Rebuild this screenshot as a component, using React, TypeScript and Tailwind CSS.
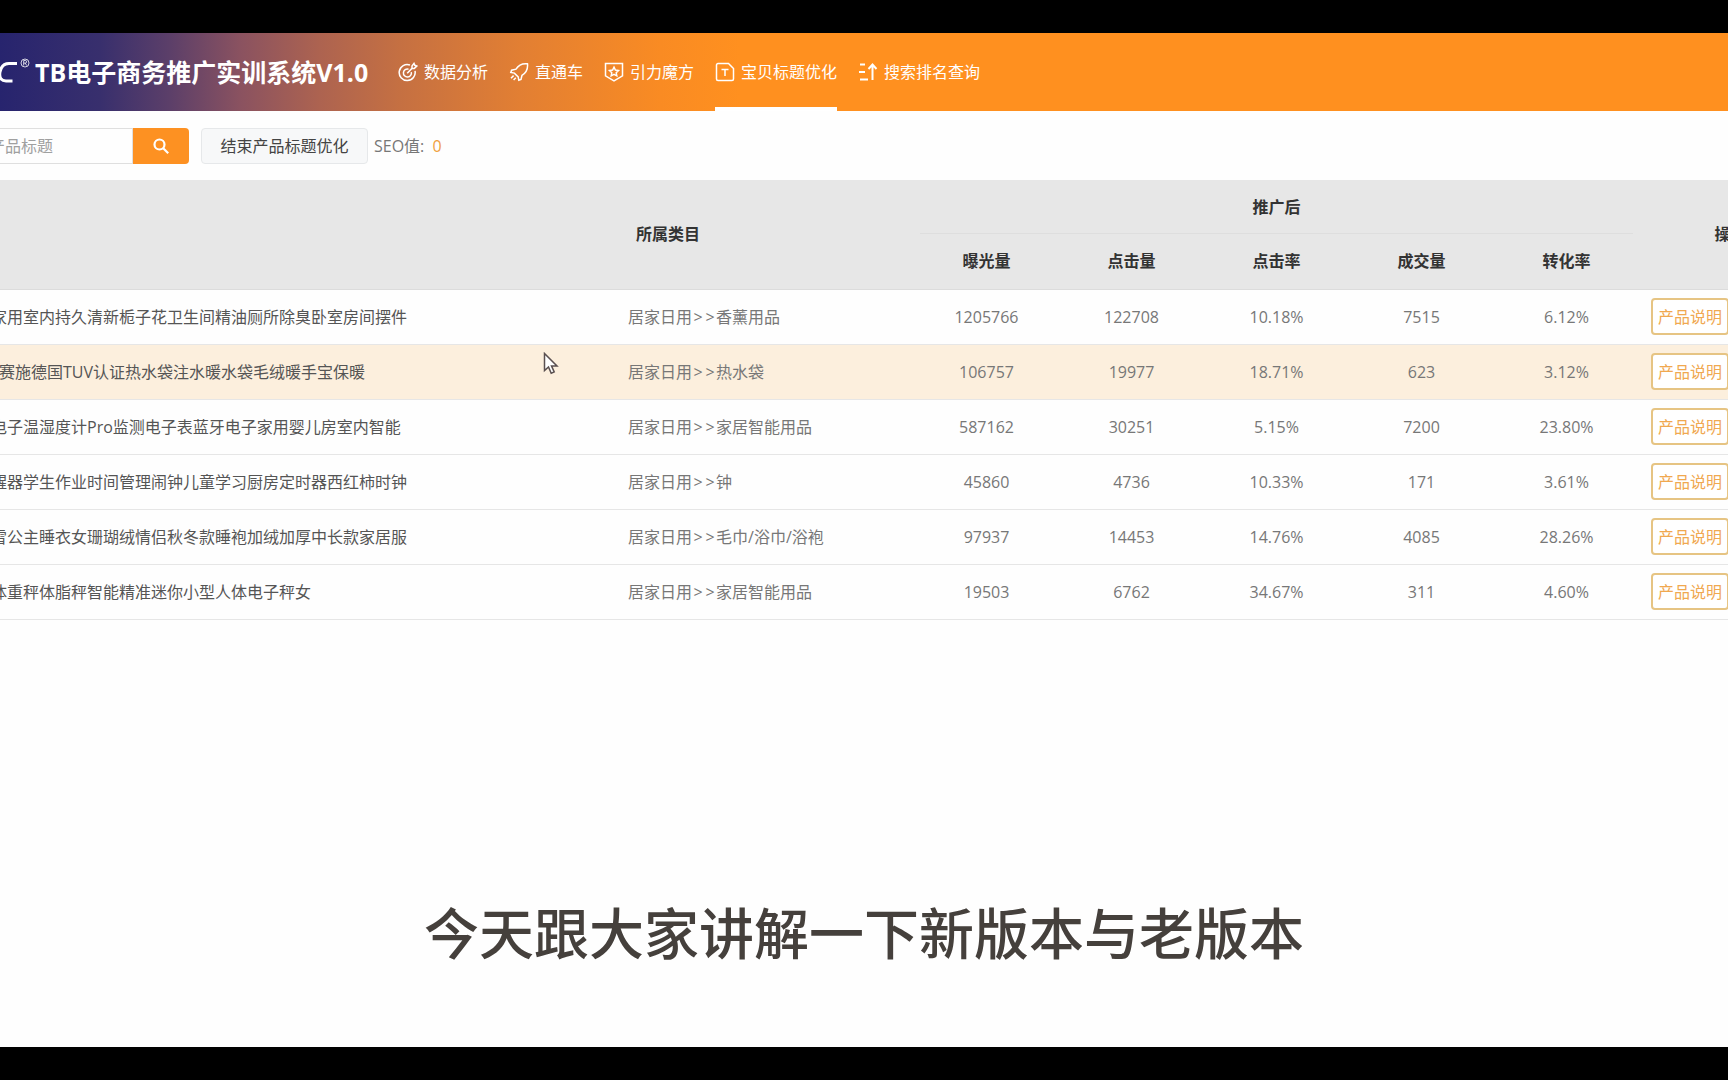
import type { ReactElement, ReactNode } from 'react'

const navItems: Array<{ label: string; icon: ReactNode; active?: boolean }> = [
  {
    label: '数据分析',
    icon: (
      <>
        <path d="M12 3A8 8 0 1 0 17 8.800" />
        <path d="M10.500 7.200a4 4 0 1 0 2.800 2.900" />
        <path d="M9.200 11.200 14 6.400V4l2-2.600.8 1.900 2 .8-2.500 2.300H14" />
      </>
    ),
  },
  {
    label: '直通车',
    icon: (
      <>
        <path d="M18.500 1.800c-5-.6-9 1.200-11.500 5.400L2.600 8.200 1.800 10.500l3.600.6 3.800 3.800.6 3.400 2.200-.8 1-4.200c4.200-2.600 6-6.600 5.500-11.500z" />
        <path d="M4.600 13.600 2 16.200M6.800 15.800l-2.200 2.200" />
      </>
    ),
  },
  {
    label: '引力魔方',
    icon: (
      <>
        <path d="M1.500 1.500h17v12.300L10 18.800l-8.500-5z" />
        <path d="m10 5.200 1.400 2.900 3.100.4-2.300 2.200.6 3.200-2.800-1.500-2.800 1.500.6-3.200-2.300-2.200 3.100-.4z" />
      </>
    ),
  },
  {
    label: '宝贝标题优化',
    active: true,
    icon: (
      <>
        <path d="M3 1.500h10.500l5 5V17a1.500 1.500 0 0 1-1.500 1.500H3A1.500 1.500 0 0 1 1.500 17V3A1.500 1.500 0 0 1 3 1.500z" />
        <path d="M6.500 7.500h7M10 7.500v6.500" />
      </>
    ),
  },
  {
    label: '搜索排名查询',
    icon: (
      <>
        <path d="M2 2.500h5M1 10h6M2 17.500h8" strokeWidth="2" />
        <path d="M14.500 18V3M10.500 7l4-4.500 4 4.500" strokeWidth="2" />
      </>
    ),
  },
]

const metricHeads = ['曝光量', '点击量', '点击率', '成交量', '转化率']

const rows: Array<{ title: string; category: string; metrics: string[]; hovered?: boolean }> = [
  {
    title: '家用室内持久清新栀子花卫生间精油厕所除臭卧室房间摆件',
    category: '香薰用品',
    metrics: ['1205766', '122708', '10.18%', '7515', '6.12%'],
  },
  {
    title: '\u2002赛施德国TUV认证热水袋注水暖水袋毛绒暖手宝保暖',
    category: '热水袋',
    metrics: ['106757', '19977', '18.71%', '623', '3.12%'],
    hovered: true,
  },
  {
    title: '电子温湿度计Pro监测电子表蓝牙电子家用婴儿房室内智能',
    category: '家居智能用品',
    metrics: ['587162', '30251', '5.15%', '7200', '23.80%'],
  },
  {
    title: '醒器学生作业时间管理闹钟儿童学习厨房定时器西红柿时钟',
    category: '钟',
    metrics: ['45860', '4736', '10.33%', '171', '3.61%'],
  },
  {
    title: '雪公主睡衣女珊瑚绒情侣秋冬款睡袍加绒加厚中长款家居服',
    category: '毛巾/浴巾/浴袍',
    metrics: ['97937', '14453', '14.76%', '4085', '28.26%'],
  },
  {
    title: '体重秤体脂秤智能精准迷你小型人体电子秤女',
    category: '家居智能用品',
    metrics: ['19503', '6762', '34.67%', '311', '4.60%'],
  },
]

function Header(): ReactElement {
  return (
    <header className="flex h-[78px] items-stretch bg-[linear-gradient(90deg,#27246e_0px,#382f6d_100px,#5c3f69_170px,#8a5260_240px,#ad6350_320px,#c57042_400px,#e27f33_520px,#f98b23_660px,#ff901f_740px)] text-white">
      <div className="flex w-[398px] shrink-0 items-center">
        <svg viewBox="0 0 35 40" className="h-10 w-[35px] shrink-0" fill="none" stroke="currentColor">
          <path d="M17 11.500H9C4 11.500 1 15 0 20c-1 5.500 1 9 6 9h6.500" strokeWidth="3" />
          <circle cx="25" cy="11" r="4" strokeWidth="0.800" />
          <path d="M23.700 13.500v-5h1.600a1.300 1.300 0 0 1 0 2.600h-1.600M25.300 11.100l1.300 2.400" strokeWidth="0.800" />
        </svg>
        <h1 className="text-[25px] leading-8 font-bold whitespace-nowrap">TB电子商务推广实训系统V1.0</h1>
      </div>
      <nav className="flex gap-[21px]">
        {navItems.map((item) => (
          <a
            key={item.label}
            href="#"
            className={`flex items-center gap-1.5 border-y-4 border-t-transparent whitespace-nowrap ${
              item.active ? 'border-b-white' : 'border-b-transparent'
            }`}
          >
            <svg viewBox="0 0 20 20" className="size-5" fill="none" stroke="currentColor" strokeWidth="1.500">
              {item.icon}
            </svg>
            {item.label}
          </a>
        ))}
      </nav>
    </header>
  )
}

function Toolbar(): ReactElement {
  return (
    <div className="flex h-[69px] items-center">
      <form className="-ml-3 flex h-9" onSubmit={(e) => e.preventDefault()}>
        <input
          type="text"
          aria-label="产品标题"
          placeholder="产品标题"
          className="w-[145px] border border-[#dfdfdf] text-[16px] placeholder:text-[#a0a0a0]"
        />
        <button
          type="submit"
          aria-label="搜索"
          className="flex w-14 items-center justify-center rounded-r-sm bg-[#fd9122] text-white"
        >
          <svg viewBox="0 0 16 16" className="size-4" fill="none" stroke="currentColor" strokeWidth="2.200">
            <circle cx="6.500" cy="6.500" r="5" />
            <path d="m10.200 10.200 5 5" />
          </svg>
        </button>
      </form>
      <button
        type="button"
        className="ml-3 h-9 w-[167px] rounded-sm border border-[#e6e8ea] bg-[#f7f8f9] whitespace-nowrap text-[#444]"
      >
        结束产品标题优化
      </button>
      <span className="ml-1.5 text-[#777]">
        SEO值: <span className="ml-1 text-[#f0a040]">0</span>
      </span>
    </div>
  )
}

function ProductTable(): ReactElement {
  return (
    <div className="-ml-[9px]">
      <table className="w-[1831px] table-fixed">
        <colgroup>
          <col className="w-[629px]" />
          <col className="w-[294px]" />
          <col className="w-[145px]" />
          <col className="w-[145px]" />
          <col className="w-[145px]" />
          <col className="w-[145px]" />
          <col className="w-[145px]" />
          <col />
        </colgroup>
        <thead className="bg-[#e7e7e7] text-[#333]">
          <tr className="h-[54px]">
            <th rowSpan={2} className="border-b border-[#dcdcdc]" />
            <th rowSpan={2} className="border-b border-[#dcdcdc] pl-4 text-left">
              所属类目
            </th>
            <th colSpan={5} className="px-1.5 py-0">
              <div className="flex h-[54px] items-center justify-center border-b border-[#dedede]">推广后</div>
            </th>
            <th rowSpan={2} className="border-b border-[#dcdcdc] text-center">
              操作
            </th>
          </tr>
          <tr className="h-[55px]">
            {metricHeads.map((head) => (
              <th key={head} className="border-b border-[#dcdcdc]">
                {head}
              </th>
            ))}
          </tr>
        </thead>
        <tbody className="text-[#777]">
          {rows.map((row) => (
            <tr key={row.title} className={`h-[55px] border-b border-[#e6e6e6] ${row.hovered ? 'bg-[#fcefdd]' : ''}`}>
              <td className="whitespace-nowrap text-[#555]">{row.title}</td>
              <td className="pl-2 whitespace-nowrap">
                居家日用
                <span className="inline-block w-3 text-center">&gt;</span>
                <span className="inline-block w-3 text-center">&gt;</span>
                {row.category}
              </td>
              {row.metrics.map((value, i) => (
                <td key={metricHeads[i]} className="text-center">
                  {value}
                </td>
              ))}
              <td className="pl-3">
                <button
                  type="button"
                  className="h-[37px] w-[78px] rounded border-2 border-[#e6c483] bg-white whitespace-nowrap text-[#f0a850]"
                >
                  产品说明
                </button>
              </td>
            </tr>
          ))}
        </tbody>
      </table>
    </div>
  )
}

function Cursor(): ReactElement {
  return (
    <svg
      viewBox="0 0 16 24"
      className="absolute top-[319px] left-[543px] h-6 w-4"
      fill="#fff"
      stroke="#5a5050"
      strokeWidth="1.500"
    >
      <path d="M1.500 1.500v17l4-3.500 2.700 6.200 3-1.300-2.700-6H14z" />
    </svg>
  )
}

export default function App(): ReactElement {
  return (
    <div className="relative flex min-h-screen flex-col overflow-hidden border-y-[33px] border-black bg-[#fefefe] font-['Open_Sans','Noto_Sans_CJK_SC',sans-serif] text-[16px] leading-6">
      <Header />
      <Toolbar />
      <ProductTable />
      <p className="mt-auto mb-[74px] text-center text-[55px] leading-[80px] font-medium text-[#45403c]">
        今天跟大家讲解一下新版本与老版本
      </p>
      <Cursor />
    </div>
  )
}
